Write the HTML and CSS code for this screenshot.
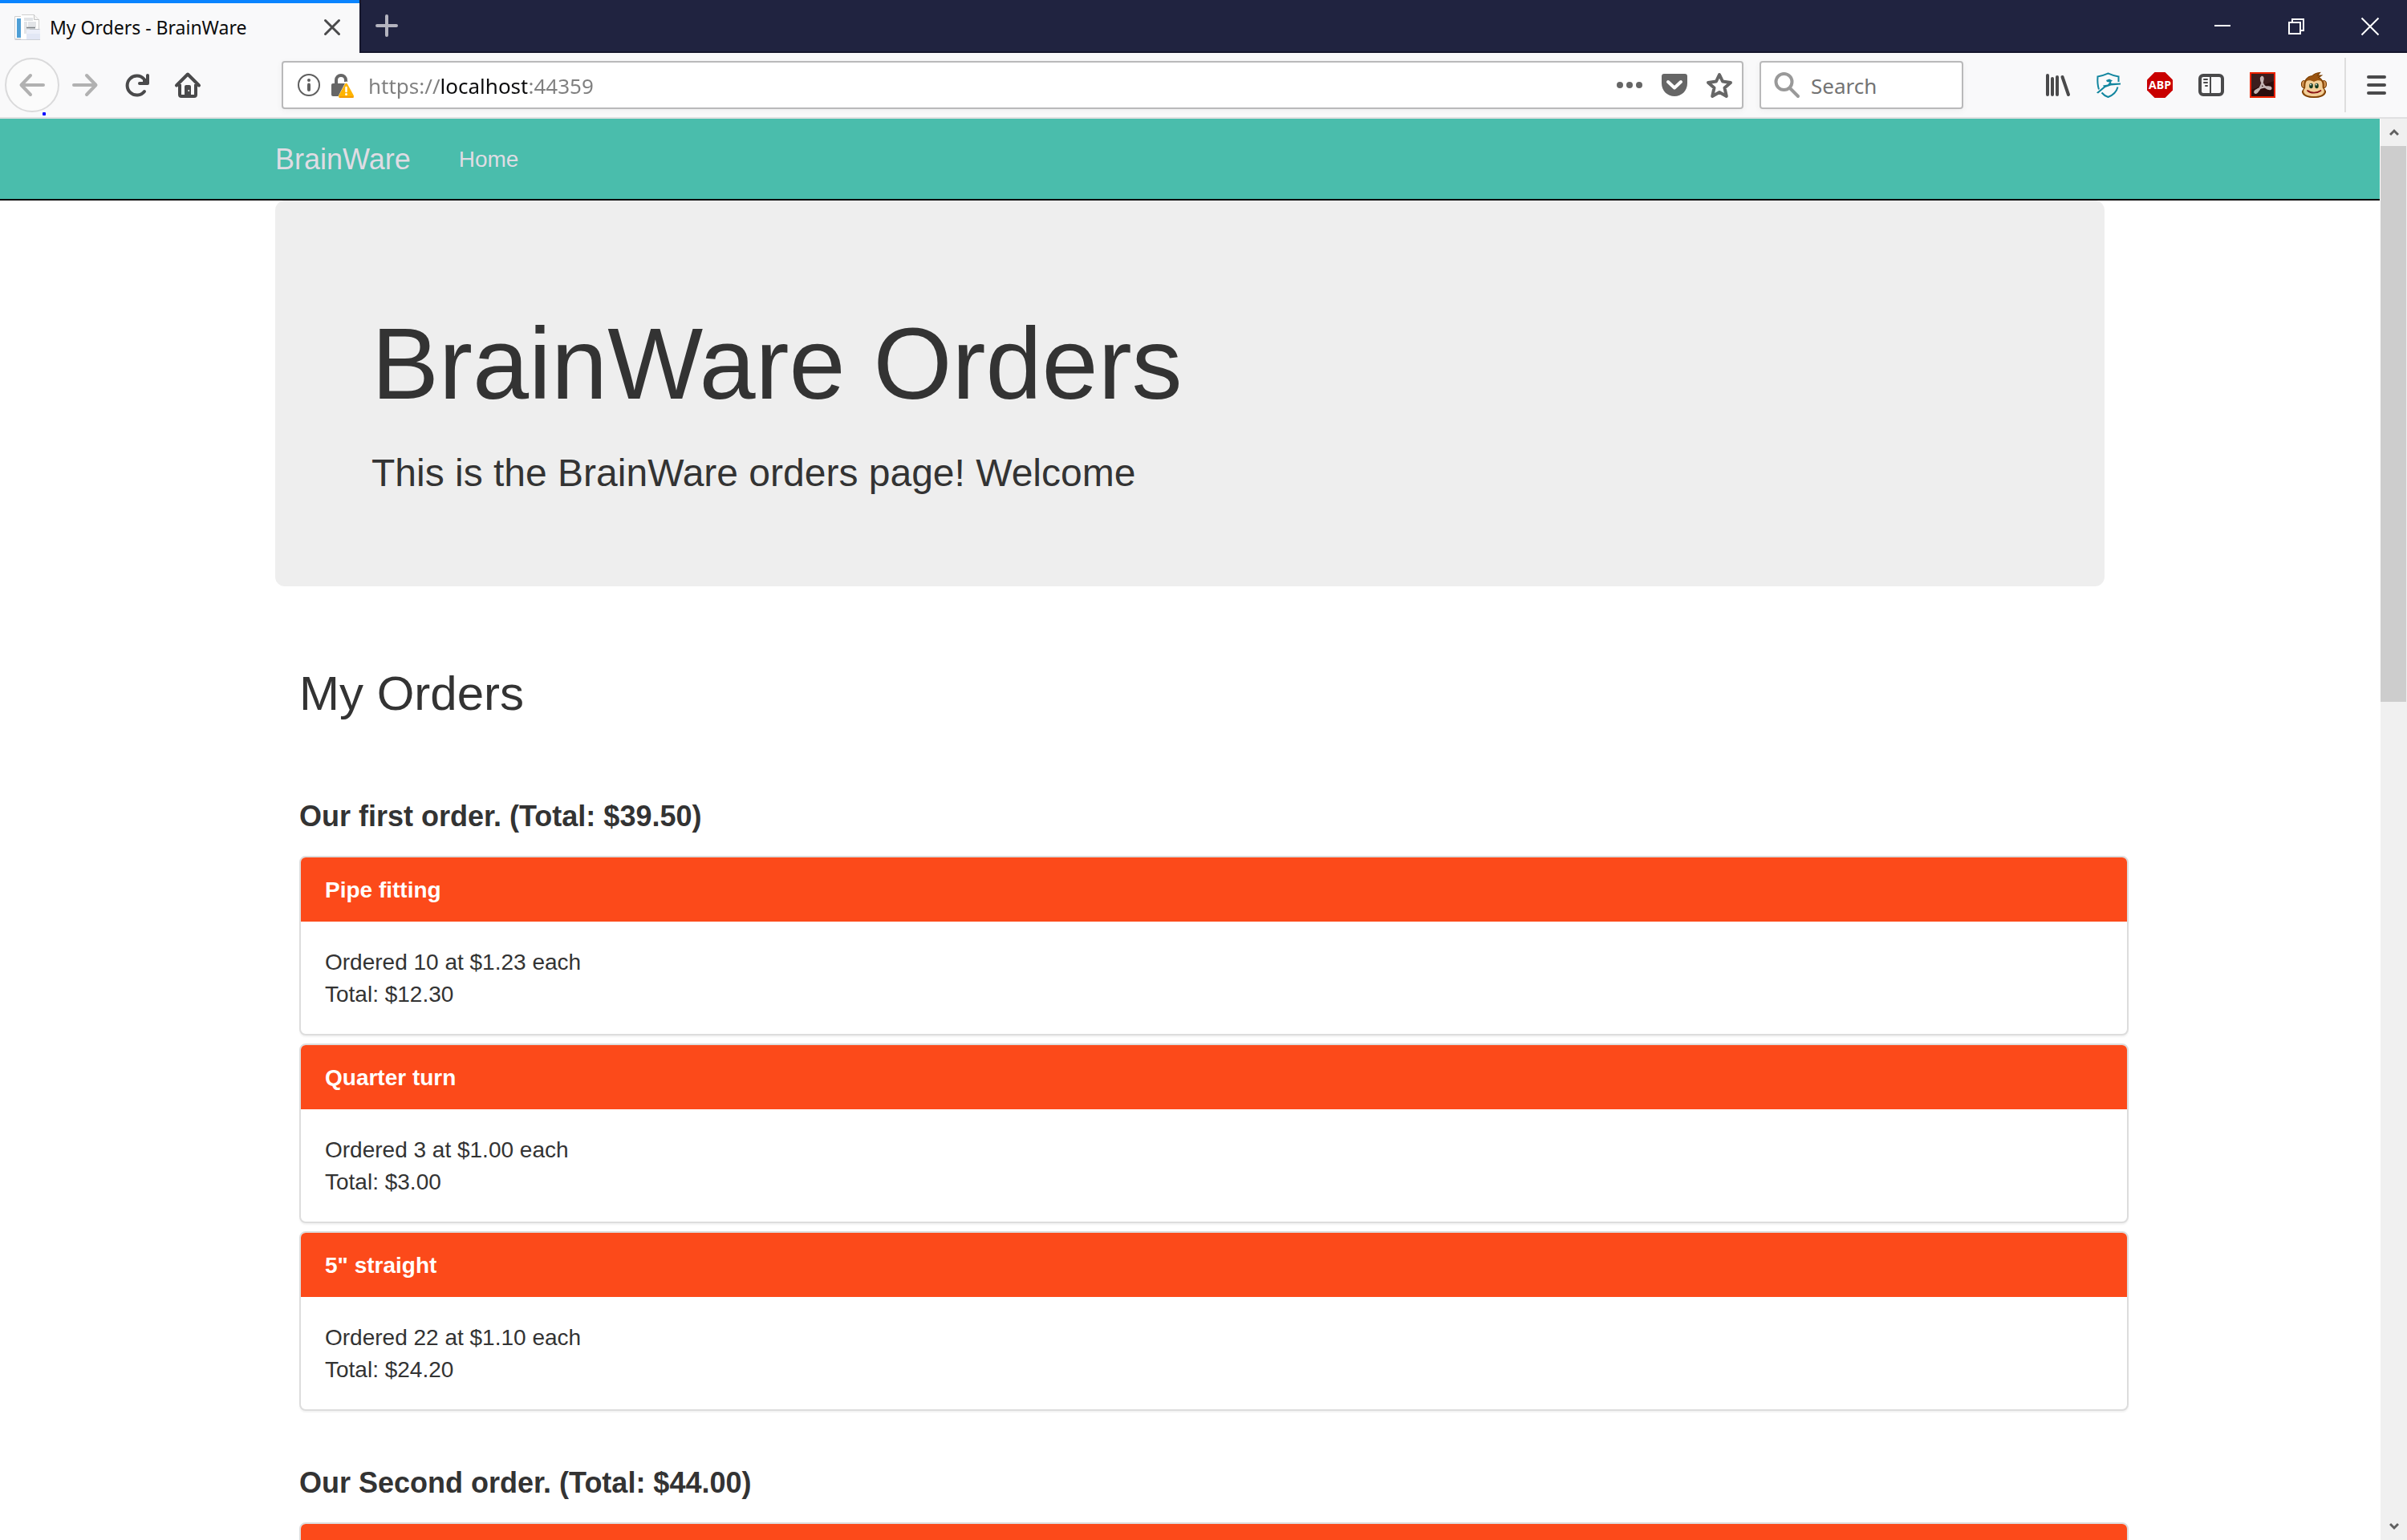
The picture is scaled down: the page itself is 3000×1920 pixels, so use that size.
FILE: index.html
```html
<!DOCTYPE html>
<html lang="en">
<head>
<meta charset="utf-8">
<meta name="viewport" content="width=device-width, initial-scale=1">
<title>My Orders - BrainWare</title>
<link rel="stylesheet" href="styles.css">
</head>
<body class="window">

<header class="tabbar">
  <div class="tab">
    <svg class="icon" viewBox="0 0 32 32" aria-hidden="true">
      <path d="M.5 2.500h8v28h-8z" fill="#fff" stroke="#cfcfcf"/>
      <path d="M3 5h5v24H3z" fill="#4f9fd6"/>
      <path d="M8 1h17l6 6v24H8z" fill="#fff"/>
      <path d="M9 .5h15.500l6 6V18" fill="none" stroke="#cfcfcf"/>
      <path d="M24.500.5v6h6" fill="#f4f4f4" stroke="#c4c4c4"/>
      <path d="M12 4h11v4H12zM12 9h4v15h-4zM17 9h10v7H17z" fill="#e2e4e7"/>
      <path d="M15 16h11v4H15z" fill="#dcdfe2"/>
      <path d="M15 16.500h11" stroke="#7e8286" stroke-width="1.500"/>
      <path d="M15 19h17v12H15z" fill="#eceff9"/>
      <path d="M15 24h17v7H15z" fill="#e2e7f5"/>
      <path d="M19 18.500h12.500" stroke="#bfc3c8"/>
      <path d="M.5 31.500H32" stroke="#cdd0d6"/>
    </svg>
    <span class="tab-title">My Orders - BrainWare</span>
    <button class="tab-close" type="button" aria-label="Close tab">
      <svg class="icon" viewBox="0 0 32 32"><path d="M7.500 7.500l17 17M24.500 7.500l-17 17" fill="none" stroke="#4a4a4b" stroke-width="3" stroke-linecap="round"/></svg>
    </button>
  </div>
  <button class="new-tab" type="button" aria-label="New tab">
    <svg class="icon" viewBox="0 0 32 32"><path d="M16 4v24M4 16h24" fill="none" stroke="#b4b4bf" stroke-width="4" stroke-linecap="round"/></svg>
  </button>
  <div class="window-controls">
    <button class="window-button" type="button" aria-label="Minimize"><svg class="icon" viewBox="0 0 32 32"><path d="M6 15h20" stroke="#fff" stroke-width="2"/></svg></button>
    <button class="window-button" type="button" aria-label="Restore"><svg class="icon" viewBox="0 0 32 32"><path d="M7 11h14v14H7zM11 11V7h14v14h-4" fill="none" stroke="#fff" stroke-width="2"/></svg></button>
    <button class="window-button" type="button" aria-label="Close"><svg class="icon" viewBox="0 0 32 32"><path d="M5.500 5.500l21 21M26.500 5.500l-21 21" stroke="#fff" stroke-width="2"/></svg></button>
  </div>
</header>

<div class="toolbar">
  <button class="tool tool-back" type="button" aria-label="Back">
    <svg class="icon" viewBox="0 0 32 32"><path d="M30 16H3M14 4L2.500 16 14 28" fill="none" stroke="#b1b1b1" stroke-width="4" stroke-linecap="round" stroke-linejoin="round"/></svg>
  </button>
  <span class="cursor-dot"></span>
  <button class="tool" type="button" aria-label="Forward">
    <svg class="icon" viewBox="0 0 32 32"><path d="M2 16h27M18 4l11.500 12L18 28" fill="none" stroke="#b1b1b1" stroke-width="4" stroke-linecap="round" stroke-linejoin="round"/></svg>
  </button>
  <button class="tool" type="button" aria-label="Reload">
    <svg class="icon" viewBox="0 0 32 32"><path d="M25.500 8.500A12 12 0 1 0 26 24" fill="none" stroke="#4a4a4b" stroke-width="4" stroke-linecap="round"/><path d="M30 2c1 0 2 .8 2 2v10a2 2 0 0 1-2 2H20a2 2 0 0 1 0-4h8V4c0-1.200 1-2 2-2z" fill="#4a4a4b"/><path d="M24 8l6 0v6h-6z" fill="#4a4a4b"/></svg>
  </button>
  <button class="tool" type="button" aria-label="Home">
    <svg class="icon" viewBox="0 0 32 32"><path d="M2 16.500L16 2.500l14 14" fill="none" stroke="#4a4a4b" stroke-width="4" stroke-linecap="round" stroke-linejoin="round"/><path d="M6 15v13c0 1.200.8 2 2 2h16c1.200 0 2-.8 2-2V15" fill="none" stroke="#4a4a4b" stroke-width="4"/><path d="M12 30V18a2 2 0 0 1 2-2h4a2 2 0 0 1 2 2v12z" fill="#4a4a4b"/><path d="M16.500 22h1.500v2h-1.500z" fill="#f9f9fa"/></svg>
  </button>

  <div class="field url-field">
    <svg class="icon" viewBox="0 0 32 32" aria-hidden="true"><circle cx="16" cy="16" r="13" fill="none" stroke="#5f5f5f" stroke-width="2"/><circle cx="16" cy="10" r="2" fill="#5f5f5f"/><path d="M16 15.500v6.500" stroke="#5f5f5f" stroke-width="4" stroke-linecap="round"/></svg>
    <svg class="icon" viewBox="0 0 32 32" aria-hidden="true"><path d="M8 15V10a6 6 0 0 1 12 0v2" fill="none" stroke="#666" stroke-width="4"/><path d="M4 14h16l3 3-8 13H4a2 2 0 0 1-2-2V16c0-1.200.8-2 2-2z" fill="#666"/><path d="M20.500 11L31 32H9.500z" fill="#fff"/><path d="M19 14.800c.8-1.300 2.400-1.300 3 0l7.800 14.200c.6 1.500-.3 3-1.800 3H13c-1.500 0-2.400-1.500-1.700-3z" fill="#ffb400"/><path d="M12 30.500c.3.4.7.5 1.200.5h14.800c.6 0 1-.2 1.300-.5" fill="none" stroke="#f39b00" stroke-width="2"/><path d="M20.500 19v5" stroke="#fff" stroke-width="2.500" stroke-linecap="round"/><circle cx="20.500" cy="27.500" r="1.500" fill="#fff"/></svg>
    <input class="url-input" type="text" aria-label="Address" value="https://localhost:44359" spellcheck="false">
    <div class="field-actions">
      <button class="field-button" type="button" aria-label="Page actions"><svg class="icon" viewBox="0 0 32 32"><g fill="#666"><circle cx="4" cy="16" r="4"/><circle cx="16" cy="16" r="4"/><circle cx="28" cy="16" r="4"/></g></svg></button>
      <button class="field-button" type="button" aria-label="Save to Pocket"><svg class="icon" viewBox="0 0 32 32"><path d="M3 2h26c1.800 0 3 1.200 3 3v9c0 9-7 16-16 16S0 23 0 14V5c0-1.800 1.200-3 3-3z" fill="#666"/><path d="M8 12l8 7.500 8-7.500" fill="none" stroke="#fff" stroke-width="4" stroke-linecap="round" stroke-linejoin="round"/></svg></button>
      <button class="field-button" type="button" aria-label="Bookmark this page"><svg class="icon" viewBox="0 0 32 32"><path d="M16 3l4 8.500 10 1.400-7.500 6.600L24.800 30 16 25 7.200 30l2.300-10.500L2 12.900l10-1.400z" fill="none" stroke="#666" stroke-width="4" stroke-linejoin="round"/></svg></button>
    </div>
  </div>

  <label class="field search-field">
    <svg class="icon" viewBox="0 0 32 32" aria-hidden="true"><circle cx="12.500" cy="12" r="10" fill="none" stroke="#999" stroke-width="4"/><path d="M20 20l10 10" stroke="#999" stroke-width="4" stroke-linecap="round"/></svg>
    <input class="search-input" type="text" aria-label="Search" placeholder="Search">
  </label>

  <div class="extensions">
    <button class="tool" type="button" aria-label="Library"><svg class="icon" viewBox="0 0 32 32"><path d="M4 4v24M10 8v20M16 6v22M22.500 6l7.500 22" fill="none" stroke="#4a4a4b" stroke-width="4" stroke-linecap="round"/></svg></button>
    <button class="tool" type="button" aria-label="Privacy shield"><svg class="icon" viewBox="0 0 32 32"><path d="M4 21.500C2.500 17 2 12 2.500 5.500 8 5 11 3.500 15.500 1.500c4.500 2 7.500 3.500 13 4V12" fill="none" stroke="#12869f" stroke-width="2"/><path d="M27.500 18.500c-1.500 6-5.500 10-12 12.500-3-1-5.500-2.500-8-5.500" fill="none" stroke="#12869f" stroke-width="2"/><path d="M1 25.500L10 18l-1-1.500 6-1 2.500-3-3.500-.5-1-2 4-1.500 4 2-2 1.500.5 2L19 14l12-.500v2l-12 1-7 2.500-9 7.500z" fill="#12869f"/></svg></button>
    <button class="tool" type="button" aria-label="Adblock Plus"><svg class="icon" viewBox="0 0 32 32"><path d="M9.500 0h13L32 9.500v13L22.500 32h-13L0 22.500v-13z" fill="#c90000"/><text class="abp-text" x="16" y="21" text-anchor="middle">ABP</text></svg></button>
    <button class="tool" type="button" aria-label="Sidebars"><svg class="icon" viewBox="0 0 32 32"><rect x="2" y="4" width="28" height="24" rx="4" fill="none" stroke="#4a4a4b" stroke-width="4"/><path d="M15 5v22" stroke="#4a4a4b" stroke-width="2"/><path d="M7 9h4M7 13h4M9 17h2" stroke="#4a4a4b" stroke-width="2" stroke-linecap="round"/></svg></button>
    <button class="tool" type="button" aria-label="Adobe Acrobat"><svg class="icon" viewBox="0 0 32 32"><path d="M1 1h30v30H1z" fill="#2b0d0d" stroke="#ed2200" stroke-width="2"/><path d="M2 2h28v9L2 22z" fill="#4a2828" opacity=".6"/><path d="M15 6c-1.800.8-.8 4.500.5 7.500 2.500 5 7 8 10 7.500 1.500-.5 1-2.500-1.500-2.500-6-.5-12.500 1.500-16.500 4.500-2.500 2-.5 4 1.500 2C12.500 21.500 16 14 16.500 8.500 16.500 7 16 5.800 15 6z" fill="none" stroke="#c4b4b4" stroke-width="2.400"/></svg></button>
    <button class="tool" type="button" aria-label="Greasemonkey"><svg class="icon" viewBox="0 0 32 32"><g stroke="#7c3f00" stroke-width="1.200"><ellipse cx="3.500" cy="15" rx="3" ry="4.500" fill="#d69a5a"/><ellipse cx="28.500" cy="15" rx="3" ry="4.500" fill="#d69a5a"/><path d="M4 20C3 10 8 5 14 4.500c2-2.500 5-3.500 9.500-4l-3 3.500h5l-3.500 2.500C27 9 29 14 28 20l2.500 4c0 5-7 7.500-14.500 7.500S1.500 29 1.500 24z" fill="#9a5410"/></g><path d="M5 20c1-2-.5-6 2-9 2-1.500 6-1 9 1 3-2 7-2.500 9-1 2.500 3 1 7 2 9 3 3 2 6-1 8-5 2.800-15 2.800-20 0-3-2-4-5-1-8z" fill="#f2cf98"/><ellipse cx="12.500" cy="17" rx="2.300" ry="3.200" fill="#143b20"/><ellipse cx="19.500" cy="17" rx="2.300" ry="3.200" fill="#143b20"/><circle cx="12" cy="15.500" r=".9" fill="#fff"/><circle cx="19" cy="15.500" r=".9" fill="#fff"/><path d="M8 23c4 3.500 12 3.500 16.500 0" fill="none" stroke="#8a1414" stroke-width="1.700" stroke-linecap="round"/></svg></button>
  </div>
  <span class="separator"></span>
  <button class="tool" type="button" aria-label="Open menu"><svg class="icon" viewBox="0 0 32 32"><path d="M6 6h20M6 16h20M6 26h20" stroke="#4a4a4b" stroke-width="4" stroke-linecap="round"/></svg></button>
</div>

<div class="viewport">
  <div class="page">
    <nav class="navbar">
      <div class="container navbar-inner">
        <a class="navbar-brand" href="#">BrainWare</a>
        <a class="navbar-link" href="#">Home</a>
      </div>
    </nav>

    <main class="container">
      <section class="jumbotron">
        <h1 class="jumbotron-title">BrainWare Orders</h1>
        <p class="jumbotron-text">This is the BrainWare orders page! Welcome</p>
      </section>

      <section class="orders">
        <h2 class="orders-title">My Orders</h2>

        <section class="order">
          <h3 class="order-title">Our first order. (Total: $39.50)</h3>
          <div class="panels">
            <article class="panel">
              <h4 class="panel-heading">Pipe fitting</h4>
              <div class="panel-body"><div>Ordered 10 at $1.23 each</div><div>Total: $12.30</div></div>
            </article>
            <article class="panel">
              <h4 class="panel-heading">Quarter turn</h4>
              <div class="panel-body"><div>Ordered 3 at $1.00 each</div><div>Total: $3.00</div></div>
            </article>
            <article class="panel">
              <h4 class="panel-heading">5" straight</h4>
              <div class="panel-body"><div>Ordered 22 at $1.10 each</div><div>Total: $24.20</div></div>
            </article>
          </div>
        </section>

        <section class="order">
          <h3 class="order-title">Our Second order. (Total: $44.00)</h3>
          <div class="panels">
            <article class="panel">
              <div class="panel-heading"></div>
              <div class="panel-body"></div>
            </article>
          </div>
        </section>
      </section>
    </main>
  </div>

  <div class="scrollbar" aria-hidden="true">
    <div class="scroll-arrow"><svg class="arrow" viewBox="0 0 12 10"><path d="M1 8l5-5 5 5" fill="none" stroke="#606060" stroke-width="3"/></svg></div>
    <div class="scroll-thumb"></div>
    <div class="scroll-track"></div>
    <div class="scroll-arrow"><svg class="arrow" viewBox="0 0 12 10"><path d="M1 2l5 5 5-5" fill="none" stroke="#606060" stroke-width="3"/></svg></div>
  </div>
</div>

</body>
</html>
```

FILE: styles.css
```css
*,
*::before,
*::after {
  box-sizing: border-box;
}

button,
input {
  margin: 0;
  padding: 0;
  border: 0;
  background: none;
  font: inherit;
}

h1, h2, h3, h4, p {
  margin: 0;
}

.window {
  display: flex;
  flex-direction: column;
  height: 100vh;
  margin: 0;
  overflow: hidden;
  background: #fff;
  color: #333;
  font-family: "Liberation Sans", Arial, sans-serif;
  font-size: 28px;
  line-height: 40px;
}

.icon {
  display: block;
  flex: none;
  width: 32px;
  height: 32px;
  overflow: visible;
}

/* Tab strip */

.tabbar {
  display: flex;
  flex: none;
  height: 66px;
  background: #202340;
  box-shadow: inset 0 -2px #15162c;
  font-family: "Noto Sans", "Open Sans", sans-serif;
}

.tab {
  display: flex;
  align-items: center;
  width: 448px;
  padding: 0 18px 2px;
  border-top: 4px solid #0a84ff;
  background: #f9f9fa;
  color: #0c0c0d;
}

.tab-title {
  flex: 1;
  margin-left: 12px;
  font-size: 23px;
  white-space: nowrap;
}

.new-tab {
  display: flex;
  align-items: center;
  justify-content: center;
  width: 66px;
  height: 64px;
  border-left: 2px solid #15162c;
}

.window-controls {
  display: flex;
  margin-left: auto;
}

.window-button {
  display: flex;
  align-items: center;
  justify-content: center;
  width: 92px;
}

/* Navigation toolbar */

.toolbar {
  position: relative;
  display: flex;
  flex: none;
  align-items: center;
  height: 82px;
  padding: 0 6px;
  border-bottom: 2px solid #e0e0e1;
  background: #f9f9fa;
  font-family: "Noto Sans", "Open Sans", sans-serif;
  font-size: 26px;
}

.tool {
  display: flex;
  flex: none;
  align-items: center;
  justify-content: center;
  width: 64px;
  height: 64px;
}

.tool-back {
  width: 68px;
  height: 68px;
  border: 2px solid #dadadb;
  border-radius: 50%;
  background: #fbfbfb;
}

.cursor-dot {
  position: absolute;
  top: 74px;
  left: 53px;
  width: 4px;
  height: 4px;
  border-radius: 1px;
  background: #00f;
}

.field {
  display: flex;
  align-items: center;
  height: 60px;
  border: 2px solid #b9b9ba;
  border-radius: 4px;
  background: #fff;
  box-shadow: 0 2px 8px rgba(0, 0, 0, 0.05);
}

.url-field {
  flex: 1;
  gap: 10px;
  min-width: 0;
  margin: 0 20px 0 85px;
  padding: 0 12px 0 16px;
}

.url-input,
.search-input {
  flex: 1;
  min-width: 0;
  height: 52px;
  padding-top: 2px;
}

.url-input {
  margin-left: 6px;
  background: linear-gradient(to right, #7f7f7f 90px, #0c0c0d 90px, #0c0c0d 198px, #7f7f7f 198px);
  background-clip: text;
  color: transparent;
}

.field-actions {
  display: flex;
  gap: 24px;
}

.field-button {
  width: 32px;
  height: 32px;
}

.search-field {
  flex: none;
  width: 254px;
  padding: 0 16px;
}

.search-input {
  margin-left: 14px;
}

.search-input::placeholder {
  color: #737373;
  opacity: 1;
}

.extensions {
  display: flex;
  margin-left: 85px;
}

.abp-text {
  fill: #fff;
  font-family: "Open Sans", sans-serif;
  font-size: 14px;
  font-weight: 700;
}

.separator {
  flex: none;
  width: 2px;
  height: 68px;
  margin: 0 6px;
  background: #dedede;
}

/* Page area */

.viewport {
  display: flex;
  flex: 1;
  min-height: 0;
}

.page {
  flex: 1;
  min-width: 0;
  overflow: hidden;
}

.container {
  max-width: 2280px;
  margin: 0 auto;
}

.navbar {
  border-bottom: 2px solid #080808;
  background: #4abdac;
}

.navbar-inner {
  display: flex;
  gap: 60px;
  padding: 31px 0 29px;
}

.navbar-brand,
.navbar-link {
  color: #dfdce3;
  text-decoration: none;
}

.navbar-brand {
  font-size: 36px;
}

.jumbotron {
  padding: 134px 120px 115px;
  border-radius: 12px;
  background: #eee;
}

.jumbotron-title {
  font-size: 126px;
  font-weight: 400;
  line-height: 139px;
}

.jumbotron-text {
  margin-top: 41px;
  font-size: 48px;
  line-height: 52px;
}

/* The order list sits one gutter to the right of the jumbotron */
.orders {
  margin: 101px -30px 0 30px;
}

.orders-title {
  margin-bottom: 100px;
  font-size: 60px;
  font-weight: 400;
  line-height: 66px;
}

.order {
  margin-bottom: 70px;
}

.order-title {
  margin-bottom: 29px;
  font-size: 36px;
  line-height: 40px;
}

.panels {
  display: grid;
  gap: 10px;
}

.panel {
  overflow: hidden;
  border: 2px solid #ddd;
  border-radius: 8px;
  background: #fff;
  box-shadow: 0 2px 2px rgba(0, 0, 0, 0.05);
}

.panel-heading {
  min-height: 80px;
  padding: 21px 30px 19px;
  background: #fc4a1a;
  color: #fff;
  font-size: 28px;
  line-height: 40px;
}

.panel-body {
  min-height: 140px;
  padding: 31px 30px 29px;
}

/* Scrollbar */

.scrollbar {
  display: flex;
  flex: none;
  flex-direction: column;
  width: 34px;
  border-left: 1px solid #fff;
  background: #f0f0f0;
}

.scroll-arrow {
  display: flex;
  flex: none;
  align-items: center;
  justify-content: center;
  height: 34px;
}

.arrow {
  width: 12px;
  height: 10px;
}

.scroll-thumb {
  flex: 693 1 0;
  margin-right: 1px;
  background: #cdcdcd;
}

.scroll-track {
  flex: 1011 1 0;
}
```
